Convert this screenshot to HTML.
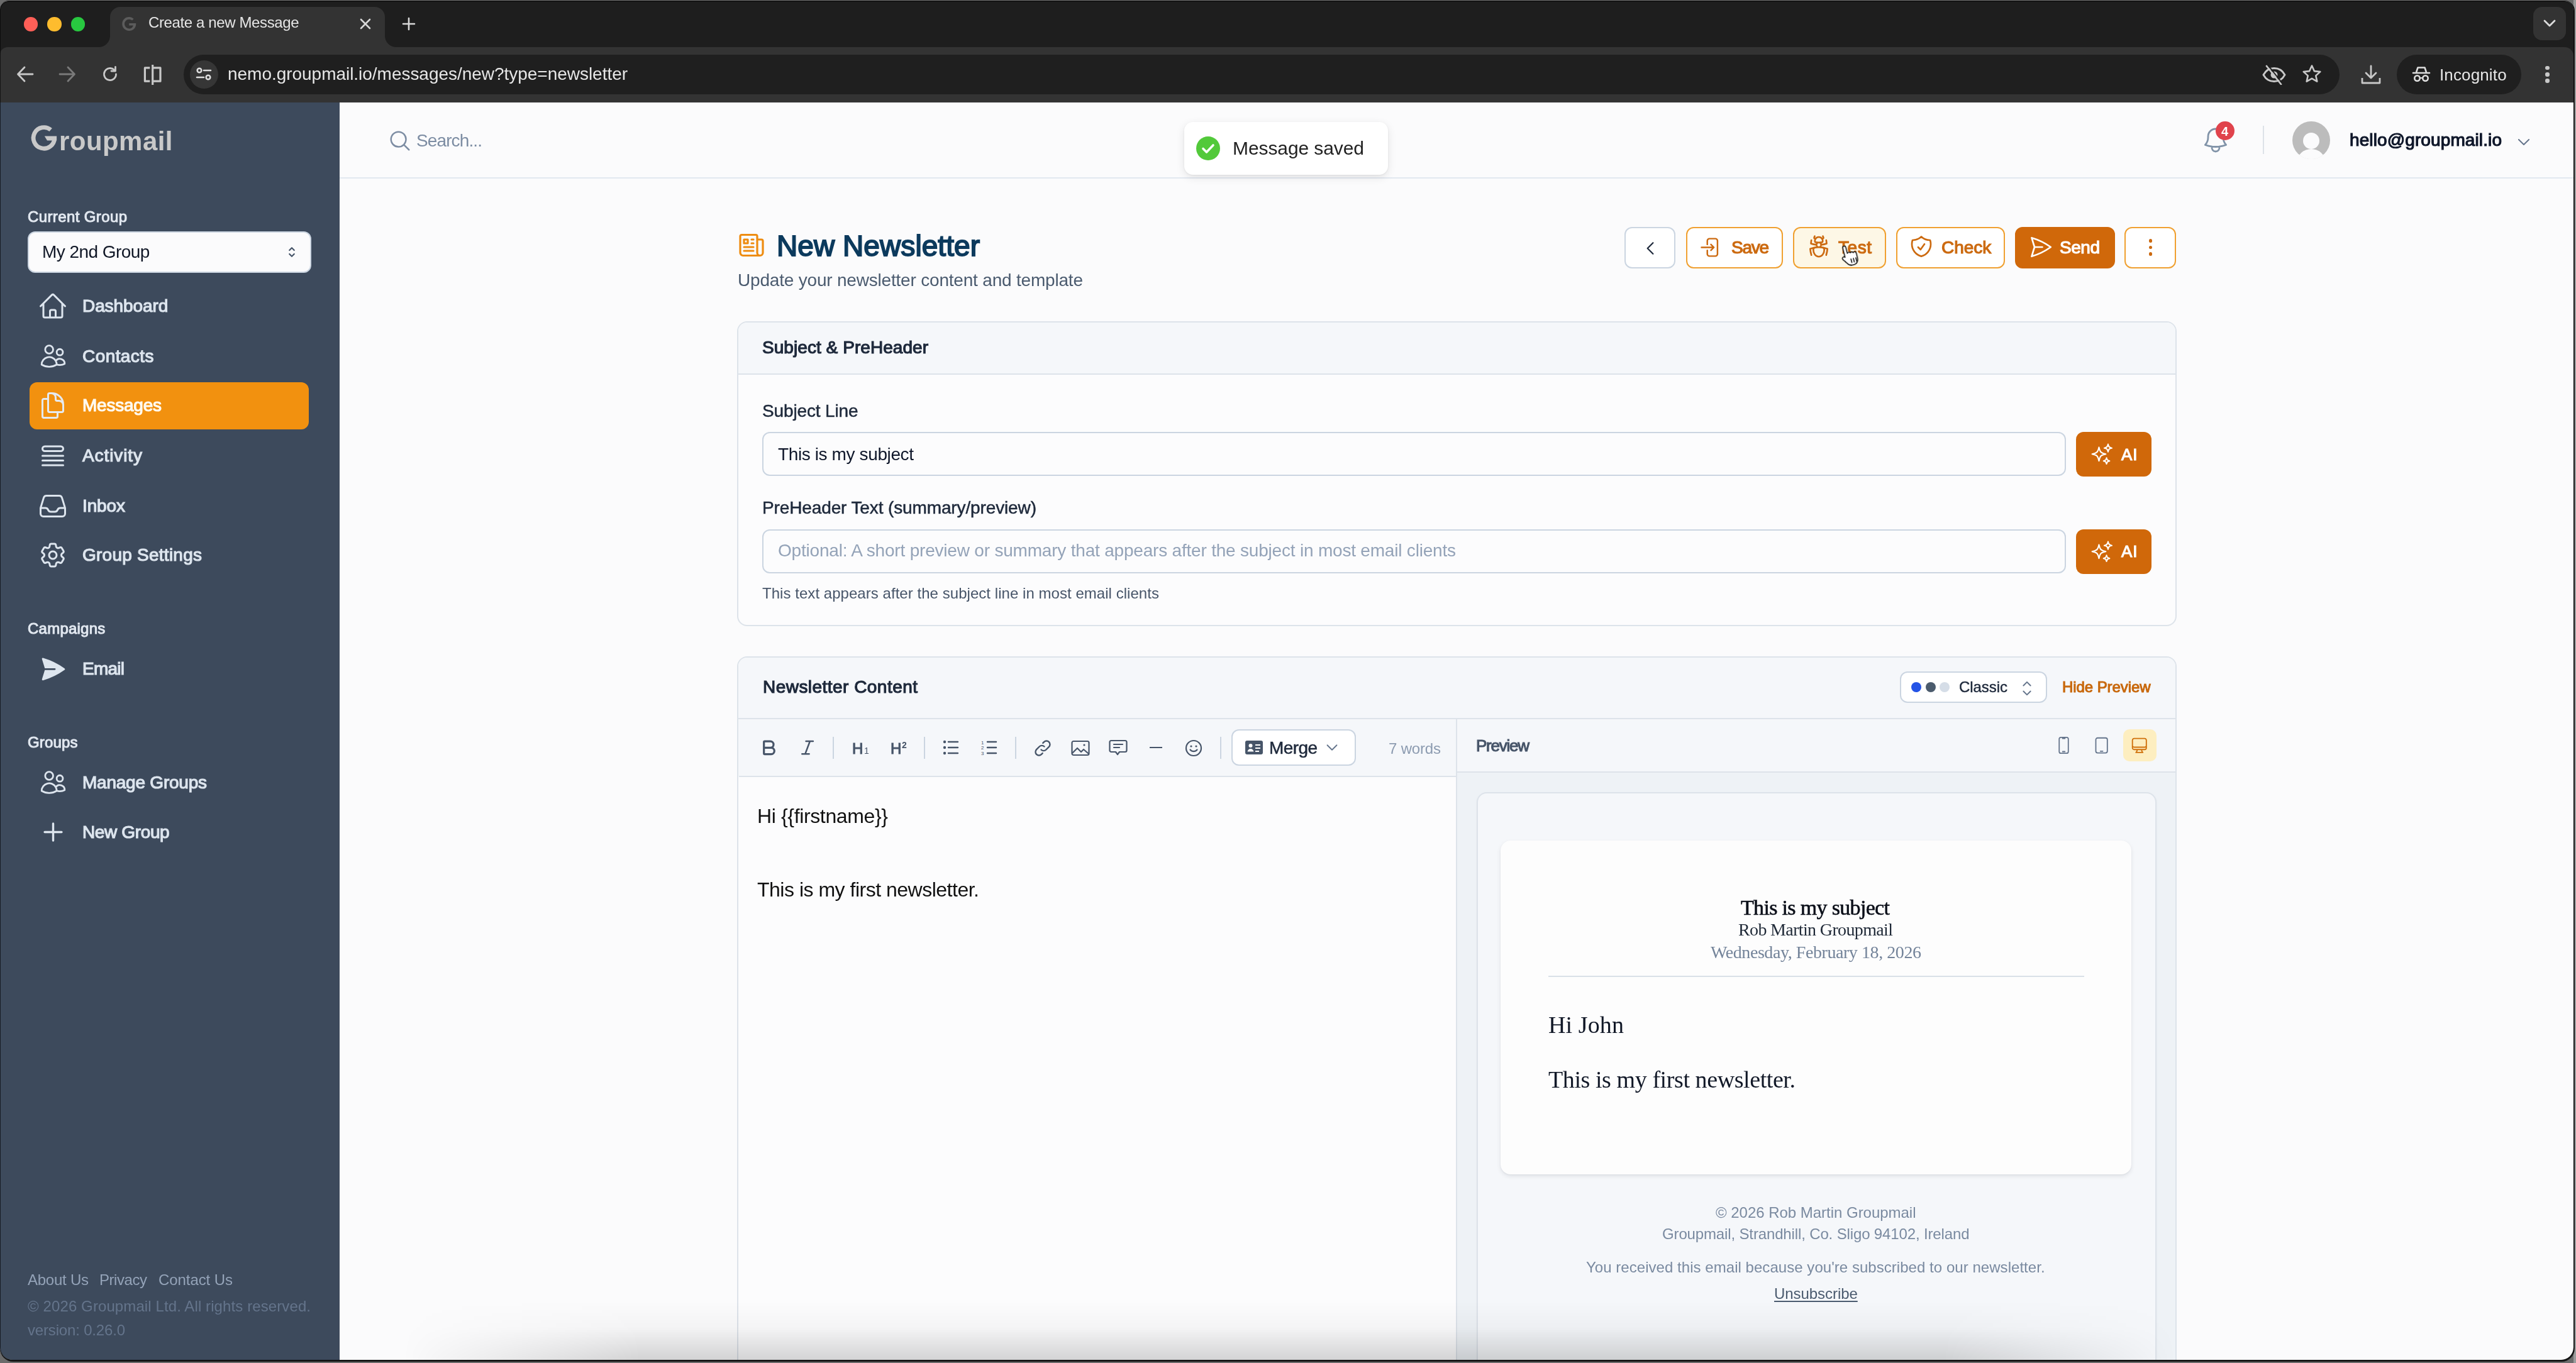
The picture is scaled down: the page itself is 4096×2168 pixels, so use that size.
<!DOCTYPE html>
<html><head><meta charset="utf-8"><title>Create a new Message</title>
<style>
html,body{margin:0;padding:0;width:4096px;height:2168px;overflow:hidden;background:#6b6b6b;}
*{box-sizing:border-box;}
body div{-webkit-font-smoothing:antialiased;}
</style></head><body>
<div style="position:absolute;left:4092px;top:0px;width:4px;height:2168px;background:#9c9c9c"></div>
<div style="position:absolute;left:0px;top:1px;width:4093.5px;height:2164.5px;background:#1c1c1c;border-radius:14px 16px 21px 21px"></div>
<div style="position:absolute;left:0;top:0;width:4096px;height:2168px;clip-path:inset(2px 4px 5px 0px round 13px 15px 20px 20px);background:#fbfbfc">
<div style="position:absolute;left:0px;top:0px;width:4096px;height:163px;background:#1e1e1e"></div>
<div style="position:absolute;left:0px;top:75px;width:4092px;height:88px;background:#333333;border-radius:12px 14px 0 0"></div>
<div style="position:absolute;left:38.0px;top:27.3px;width:22.4px;height:22.4px;background:#ff5f57;border-radius:50%"></div>
<div style="position:absolute;left:75.3px;top:27.3px;width:22.4px;height:22.4px;background:#febc2e;border-radius:50%"></div>
<div style="position:absolute;left:113.0px;top:27.3px;width:22.4px;height:22.4px;background:#28c840;border-radius:50%"></div>
<div style="position:absolute;left:175px;top:11px;width:437px;height:64px;background:#333333;border-radius:16px 16px 0 0"></div>
<div style="position:absolute;left:157px;top:57px;width:18px;height:18px;background:radial-gradient(circle at 0 0, #1e1e1e 17.5px, #333333 18.5px)"></div>
<div style="position:absolute;left:612px;top:57px;width:18px;height:18px;background:radial-gradient(circle at 100% 0, #1e1e1e 17.5px, #333333 18.5px)"></div>
<svg style="position:absolute;left:191px;top:24px;" width="28" height="28" viewBox="0 0 24 24" fill="none"><path d="M21.5 11.2H12.2v2.9h5.6c-.5 2.6-2.8 4.3-5.6 4.3-3.4 0-6.2-2.8-6.2-6.3S8.8 5.8 12.2 5.8c1.6 0 3 .6 4.1 1.5l2.2-2.2C16.8 3.6 14.6 2.6 12.2 2.6 7 2.6 2.8 6.8 2.8 12s4.2 9.4 9.4 9.4c5.4 0 9.4-3.8 9.4-9.2 0-.4 0-.7-.1-1Z" fill="#5c5c5c"/></svg>
<div style="position:absolute;left:236.00px;top:24.48px;font-family:'Liberation Sans', sans-serif;font-size:24px;line-height:24px;font-weight:400;color:#e6e6e6;white-space:pre;letter-spacing:-0.379px;will-change:transform;">Create a new Message</div>
<svg style="position:absolute;left:572px;top:29px;" width="18" height="18" viewBox="0 0 18 18" fill="none"><path d="M2 2 16 16M16 2 2 16" stroke="#d8d8d8" stroke-width="2.6" stroke-linecap="round"/></svg>
<svg style="position:absolute;left:639px;top:27px;" width="22" height="22" viewBox="0 0 22 22" fill="none"><path d="M11 2v18M2 11h18" stroke="#d8d8d8" stroke-width="2.6" stroke-linecap="round"/></svg>
<div style="position:absolute;left:4028px;top:11px;width:52px;height:53px;background:#333333;border-radius:14px"></div>
<svg style="position:absolute;left:4044px;top:31px;" width="20" height="12" viewBox="0 0 20 12" fill="none"><path d="M2 2 10 10 18 2" stroke="#dcdcdc" stroke-width="2.8" stroke-linecap="round" stroke-linejoin="round" fill="none"/></svg>
<svg style="position:absolute;left:26px;top:104px;" width="28" height="28" viewBox="0 0 28 28" fill="none"><path d="M26 14H3M13 3 2.5 14 13 25" stroke="#c8c8c8" stroke-width="2.8" stroke-linecap="round" stroke-linejoin="round" fill="none"/></svg>
<svg style="position:absolute;left:93px;top:104px;" width="28" height="28" viewBox="0 0 28 28" fill="none"><path d="M2 14h23M15 3l10.5 11L15 25" stroke="#7a7a7a" stroke-width="2.8" stroke-linecap="round" stroke-linejoin="round" fill="none"/></svg>
<svg style="position:absolute;left:161px;top:104px;" width="28" height="28" viewBox="0 0 28 28" fill="none"><path d="M23.5 14A9.5 9.5 0 1 1 20.7 7.3" stroke="#c8c8c8" stroke-width="2.8" stroke-linecap="round" fill="none"/><path d="M22.5 2.5v6.5H16" stroke="#c8c8c8" stroke-width="2.8" stroke-linecap="round" stroke-linejoin="round" fill="none"/></svg>
<svg style="position:absolute;left:228px;top:102px;" width="32" height="34" viewBox="0 0 32 34" fill="none"><path d="M10.3 5.9H2.4V27.2H10.3M14.7 1V33M14.7 5.9H27V27.2H14.7" stroke="#c8c8c8" stroke-width="3.2" stroke-linejoin="round" fill="none"/></svg>
<div style="position:absolute;left:292px;top:87px;width:3428px;height:63px;background:#1f1f1f;border-radius:32px"></div>
<div style="position:absolute;left:301.5px;top:96px;width:45px;height:45px;background:#363636;border-radius:50%"></div>
<svg style="position:absolute;left:310px;top:104px;" width="28" height="28" viewBox="0 0 28 28" fill="none"><circle cx="7" cy="8" r="3.3" stroke="#dedede" stroke-width="2.6" fill="none"/><path d="M14 8h11M3 19h11" stroke="#dedede" stroke-width="2.6" stroke-linecap="round"/><circle cx="21" cy="19" r="3.3" stroke="#dedede" stroke-width="2.6" fill="none"/></svg>
<div style="position:absolute;left:362.00px;top:104.29px;font-family:'Liberation Sans', sans-serif;font-size:28px;line-height:28px;font-weight:400;color:#e6e6e6;white-space:pre;letter-spacing:-0.030px;will-change:transform;">nemo.groupmail.io/messages/new?type=newsletter</div>
<svg style="position:absolute;left:3596px;top:103px;" width="40" height="32" viewBox="0 0 40 32" fill="none"><path d="M3 16C7 8.5 12.5 5.5 20 5.5S33 8.5 37 16c-4 7.5-9.5 10.5-17 10.5S7 23.5 3 16Z" stroke="#c8c8c8" stroke-width="2.8" fill="none"/><circle cx="20" cy="16" r="5.5" fill="#c8c8c8"/><path d="M8 2 31 31" stroke="#c8c8c8" stroke-width="2.8" stroke-linecap="round"/><path d="M10.5 1 33.5 30" stroke="#1f1f1f" stroke-width="2" /></svg>
<svg style="position:absolute;left:3660px;top:102px;" width="32" height="31" viewBox="0 0 32 31" fill="none"><path d="M16 2.5l3.9 8.6 9.4 1-7 6.3 2 9.2L16 22.9l-8.3 4.7 2-9.2-7-6.3 9.4-1Z" stroke="#c8c8c8" stroke-width="2.6" stroke-linejoin="round" fill="none"/></svg>
<svg style="position:absolute;left:3753px;top:103px;" width="34" height="32" viewBox="0 0 34 32" fill="none"><path d="M17 2v19M9 13l8 8 8-8" stroke="#c8c8c8" stroke-width="2.8" stroke-linecap="round" stroke-linejoin="round" fill="none"/><path d="M3 21v8h28v-8" stroke="#c8c8c8" stroke-width="2.8" stroke-linejoin="round" fill="none"/></svg>
<div style="position:absolute;left:3811px;top:87px;width:198px;height:63px;background:#1f1f1f;border-radius:32px"></div>
<svg style="position:absolute;left:3835px;top:104px;" width="30" height="28" viewBox="0 0 30 28" fill="none"><path d="M7 11 9.5 3.5h11L23 11" stroke="#dedede" stroke-width="2.6" stroke-linejoin="round" fill="none"/><path d="M2 12h26" stroke="#dedede" stroke-width="2.6" stroke-linecap="round"/><circle cx="8.5" cy="20.5" r="4.2" stroke="#dedede" stroke-width="2.6" fill="none"/><circle cx="21.5" cy="20.5" r="4.2" stroke="#dedede" stroke-width="2.6" fill="none"/><path d="M12.7 20h4.6" stroke="#dedede" stroke-width="2.2"/></svg>
<div style="position:absolute;left:3879.40px;top:105.59px;font-family:'Liberation Sans', sans-serif;font-size:26px;line-height:26px;font-weight:400;color:#e6e6e6;white-space:pre;letter-spacing:0.134px;will-change:transform;">Incognito</div>
<div style="position:absolute;left:4047.3999999999996px;top:104.9px;width:6.6px;height:6.6px;background:#c8c8c8;border-radius:50%"></div>
<div style="position:absolute;left:4047.3999999999996px;top:115.2px;width:6.6px;height:6.6px;background:#c8c8c8;border-radius:50%"></div>
<div style="position:absolute;left:4047.3999999999996px;top:125.39999999999999px;width:6.6px;height:6.6px;background:#c8c8c8;border-radius:50%"></div>
<div style="position:absolute;left:0px;top:163px;width:540px;height:2001px;background:#3d4a5c"></div>
<svg style="position:absolute;left:0;top:0" width="120" height="260" viewBox="0 0 120 260" fill="none"><path d="M80.7 206.5A16.8 16.8 0 1 0 86.7 220.3" stroke="#c9c9c9" stroke-width="6.8" fill="none"/><path d="M70.8 216.6H90.1V223.4H75Z" fill="#c9c9c9"/></svg>
<div style="position:absolute;left:93.50px;top:203.64px;font-family:'Liberation Sans', sans-serif;font-size:42px;line-height:42px;font-weight:700;color:#c9c9c9;white-space:pre;letter-spacing:0.449px;will-change:transform;">roupmail</div>
<div style="position:absolute;left:43.60px;top:333.38px;font-family:'Liberation Sans', sans-serif;font-size:24px;line-height:24px;font-weight:400;color:#e2e8f0;white-space:pre;-webkit-text-stroke:1.01px #e2e8f0;letter-spacing:0.383px;will-change:transform;">Current Group</div>
<div style="position:absolute;left:43.6px;top:367.8px;width:451px;height:66.6px;background:#fbfbfc;border:2px solid #cbd5e1;border-radius:12px"></div>
<div style="position:absolute;left:66.60px;top:387.29px;font-family:'Liberation Sans', sans-serif;font-size:28px;line-height:28px;font-weight:400;color:#111827;white-space:pre;letter-spacing:-0.547px;will-change:transform;">My 2nd Group</div>
<svg style="position:absolute;left:452px;top:389px;" width="24" height="24" viewBox="0 0 24 24" fill="none"><path d="M8.25 15 12 18.75 15.75 15m-7.5-6L12 5.25 15.75 9" stroke="#475569" stroke-width="2.2" stroke-linecap="round" stroke-linejoin="round"/></svg>
<svg style="position:absolute;left:60.3px;top:462.8px;" width="48" height="48" viewBox="0 0 24 24" fill="none"><path d="m2.25 12 8.954-8.955c.44-.439 1.152-.439 1.591 0L21.75 12M4.5 9.75v10.125c0 .621.504 1.125 1.125 1.125H9.75v-4.875c0-.621.504-1.125 1.125-1.125h2.25c.621 0 1.125.504 1.125 1.125V21h4.125c.621 0 1.125-.504 1.125-1.125V9.75M8.25 21h8.25" stroke="#dde5ee" stroke-width="1.5" stroke-linecap="round" stroke-linejoin="round"/></svg>
<div style="position:absolute;left:131.20px;top:473.09px;font-family:'Liberation Sans', sans-serif;font-size:28px;line-height:28px;font-weight:400;color:#dde5ee;white-space:pre;-webkit-text-stroke:1.18px #dde5ee;letter-spacing:-0.086px;will-change:transform;">Dashboard</div>
<svg style="position:absolute;left:62.400000000000006px;top:543.9px;" width="45" height="45" viewBox="0 0 24 24" fill="none"><path d="M15 19.128a9.38 9.38 0 0 0 2.625.372 9.337 9.337 0 0 0 4.121-.952 4.125 4.125 0 0 0-7.533-2.493M15 19.128v-.003c0-1.113-.285-2.16-.786-3.07M15 19.128v.106A12.318 12.318 0 0 1 8.624 21c-2.331 0-4.512-.645-6.374-1.766l-.001-.109a6.375 6.375 0 0 1 11.964-3.07M12 6.375a3.375 3.375 0 1 1-6.75 0 3.375 3.375 0 0 1 6.75 0Zm8.25 2.25a2.625 2.625 0 1 1-5.25 0 2.625 2.625 0 0 1 5.25 0Z" stroke="#dde5ee" stroke-width="1.5" stroke-linecap="round" stroke-linejoin="round"/></svg>
<div style="position:absolute;left:131.20px;top:552.69px;font-family:'Liberation Sans', sans-serif;font-size:28px;line-height:28px;font-weight:400;color:#dde5ee;white-space:pre;-webkit-text-stroke:1.18px #dde5ee;letter-spacing:0.429px;will-change:transform;">Contacts</div>
<div style="position:absolute;left:47.2px;top:607.8px;width:444.1px;height:75.4px;background:#f2910f;border-radius:12px"></div>
<svg style="position:absolute;left:60.3px;top:621.0px;" width="48" height="48" viewBox="0 0 24 24" fill="none"><path d="M15.75 17.25v3.375c0 .621-.504 1.125-1.125 1.125h-9.75a1.125 1.125 0 0 1-1.125-1.125V7.875c0-.621.504-1.125 1.125-1.125H6.75a9.06 9.06 0 0 1 1.5.124m7.5 10.376h3.375c.621 0 1.125-.504 1.125-1.125V11.25c0-4.46-3.243-8.161-7.5-8.876a9.06 9.06 0 0 0-1.5-.124H9.375c-.621 0-1.125.504-1.125 1.125v3.5m7.5 10.375H9.375a1.125 1.125 0 0 1-1.125-1.125v-9.25m12 6.625v-1.875a3.375 3.375 0 0 0-3.375-3.375h-1.5a1.125 1.125 0 0 1-1.125-1.125v-1.5a3.375 3.375 0 0 0-3.375-3.375H9.75" stroke="#e5eaf0" stroke-width="1.5" stroke-linecap="round" stroke-linejoin="round"/></svg>
<div style="position:absolute;left:131.20px;top:631.29px;font-family:'Liberation Sans', sans-serif;font-size:28px;line-height:28px;font-weight:400;color:#fffaf0;white-space:pre;-webkit-text-stroke:1.18px #fffaf0;letter-spacing:-0.232px;will-change:transform;">Messages</div>
<svg style="position:absolute;left:60.3px;top:701.0px;" width="48" height="48" viewBox="0 0 24 24" fill="none"><path d="M3.75 12h16.5m-16.5 3.75h16.5M3.75 19.5h16.5M5.625 4.5h12.75a1.875 1.875 0 0 1 0 3.75H5.625a1.875 1.875 0 0 1 0-3.75Z" stroke="#dde5ee" stroke-width="1.5" stroke-linecap="round" stroke-linejoin="round"/></svg>
<div style="position:absolute;left:131.20px;top:711.29px;font-family:'Liberation Sans', sans-serif;font-size:28px;line-height:28px;font-weight:400;color:#dde5ee;white-space:pre;-webkit-text-stroke:1.18px #dde5ee;letter-spacing:0.902px;will-change:transform;">Activity</div>
<svg style="position:absolute;left:60.3px;top:780.6px;" width="48" height="48" viewBox="0 0 24 24" fill="none"><path d="M2.25 13.5h3.86a2.25 2.25 0 0 1 2.012 1.244l.256.512a2.25 2.25 0 0 0 2.013 1.244h3.218a2.25 2.25 0 0 0 2.013-1.244l.256-.512a2.25 2.25 0 0 1 2.013-1.244h3.859m-19.5.338V18a2.25 2.25 0 0 0 2.25 2.25h15A2.25 2.25 0 0 0 21.75 18v-4.162c0-.224-.034-.447-.1-.661L19.24 5.338a2.25 2.25 0 0 0-2.15-1.588H6.911a2.25 2.25 0 0 0-2.15 1.588L2.35 13.177a2.25 2.25 0 0 0-.1.661Z" stroke="#dde5ee" stroke-width="1.5" stroke-linecap="round" stroke-linejoin="round"/></svg>
<div style="position:absolute;left:131.20px;top:790.89px;font-family:'Liberation Sans', sans-serif;font-size:28px;line-height:28px;font-weight:400;color:#dde5ee;white-space:pre;-webkit-text-stroke:1.18px #dde5ee;letter-spacing:-0.125px;will-change:transform;">Inbox</div>
<svg style="position:absolute;left:60.3px;top:859.0px;" width="48" height="48" viewBox="0 0 24 24" fill="none"><path d="M9.594 3.94c.09-.542.56-.94 1.11-.94h2.593c.55 0 1.02.398 1.11.94l.213 1.281c.063.374.313.686.645.87.074.04.147.083.22.127.325.196.72.257 1.075.124l1.217-.456a1.125 1.125 0 0 1 1.37.49l1.296 2.247a1.125 1.125 0 0 1-.26 1.431l-1.003.827c-.293.241-.438.613-.43.992a7.723 7.723 0 0 1 0 .255c-.008.378.137.75.43.991l1.004.827c.424.35.534.955.26 1.43l-1.298 2.247a1.125 1.125 0 0 1-1.369.491l-1.217-.456c-.355-.133-.75-.072-1.076.124a6.47 6.47 0 0 1-.22.128c-.331.183-.581.495-.644.869l-.213 1.281c-.09.543-.56.94-1.11.94h-2.594c-.55 0-1.019-.398-1.11-.94l-.213-1.281c-.062-.374-.312-.686-.644-.87a6.52 6.52 0 0 1-.22-.127c-.325-.196-.72-.257-1.076-.124l-1.217.456a1.125 1.125 0 0 1-1.369-.49l-1.297-2.247a1.125 1.125 0 0 1 .26-1.431l1.004-.827c.292-.24.437-.613.43-.991a6.932 6.932 0 0 1 0-.255c.007-.38-.138-.751-.43-.992l-1.004-.827a1.125 1.125 0 0 1-.26-1.43l1.297-2.247a1.125 1.125 0 0 1 1.37-.491l1.216.456c.356.133.751.072 1.076-.124.072-.044.146-.086.22-.128.332-.183.582-.495.644-.869l.214-1.28Z M15 12a3 3 0 1 1-6 0 3 3 0 0 1 6 0Z" stroke="#dde5ee" stroke-width="1.5" stroke-linecap="round" stroke-linejoin="round"/></svg>
<div style="position:absolute;left:131.20px;top:869.29px;font-family:'Liberation Sans', sans-serif;font-size:28px;line-height:28px;font-weight:400;color:#dde5ee;white-space:pre;-webkit-text-stroke:1.18px #dde5ee;letter-spacing:0.248px;will-change:transform;">Group Settings</div>
<div style="position:absolute;left:43.70px;top:988.48px;font-family:'Liberation Sans', sans-serif;font-size:24px;line-height:24px;font-weight:400;color:#e2e8f0;white-space:pre;-webkit-text-stroke:1.01px #e2e8f0;letter-spacing:0.237px;will-change:transform;">Campaigns</div>
<svg style="position:absolute;left:62.2px;top:1041.5px;" width="44.6" height="44.6" viewBox="0 0 24 24" fill="none"><path d="M3.478 2.404a.75.75 0 0 0-.926.941l2.432 7.905H13.5a.75.75 0 0 1 0 1.5H4.984l-2.432 7.905a.75.75 0 0 0 .926.94 60.519 60.519 0 0 0 18.445-8.986.75.75 0 0 0 0-1.218A60.517 60.517 0 0 0 3.478 2.404Z" fill="#dde5ee"/></svg>
<div style="position:absolute;left:131.20px;top:1050.29px;font-family:'Liberation Sans', sans-serif;font-size:28px;line-height:28px;font-weight:400;color:#dde5ee;white-space:pre;-webkit-text-stroke:1.18px #dde5ee;letter-spacing:-0.754px;will-change:transform;">Email</div>
<div style="position:absolute;left:43.70px;top:1169.38px;font-family:'Liberation Sans', sans-serif;font-size:24px;line-height:24px;font-weight:400;color:#e2e8f0;white-space:pre;-webkit-text-stroke:1.01px #e2e8f0;letter-spacing:0.179px;will-change:transform;">Groups</div>
<svg style="position:absolute;left:62.400000000000006px;top:1221.9px;" width="45" height="45" viewBox="0 0 24 24" fill="none"><path d="M15 19.128a9.38 9.38 0 0 0 2.625.372 9.337 9.337 0 0 0 4.121-.952 4.125 4.125 0 0 0-7.533-2.493M15 19.128v-.003c0-1.113-.285-2.16-.786-3.07M15 19.128v.106A12.318 12.318 0 0 1 8.624 21c-2.331 0-4.512-.645-6.374-1.766l-.001-.109a6.375 6.375 0 0 1 11.964-3.07M12 6.375a3.375 3.375 0 1 1-6.75 0 3.375 3.375 0 0 1 6.75 0Zm8.25 2.25a2.625 2.625 0 1 1-5.25 0 2.625 2.625 0 0 1 5.25 0Z" stroke="#dde5ee" stroke-width="1.5" stroke-linecap="round" stroke-linejoin="round"/></svg>
<div style="position:absolute;left:131.20px;top:1230.69px;font-family:'Liberation Sans', sans-serif;font-size:28px;line-height:28px;font-weight:400;color:#dde5ee;white-space:pre;-webkit-text-stroke:1.18px #dde5ee;letter-spacing:-0.233px;will-change:transform;">Manage Groups</div>
<svg style="position:absolute;left:63.099999999999994px;top:1302.0px;" width="43" height="43" viewBox="0 0 24 24" fill="none"><path d="M12 4.5v15m7.5-7.5h-15" stroke="#dde5ee" stroke-width="1.9" stroke-linecap="round" stroke-linejoin="round"/></svg>
<div style="position:absolute;left:131.20px;top:1309.79px;font-family:'Liberation Sans', sans-serif;font-size:28px;line-height:28px;font-weight:400;color:#dde5ee;white-space:pre;-webkit-text-stroke:1.18px #dde5ee;letter-spacing:-0.366px;will-change:transform;">New Group</div>
<div style="position:absolute;left:44.00px;top:2024.48px;font-family:'Liberation Sans', sans-serif;font-size:24px;line-height:24px;font-weight:400;color:#94a3b8;white-space:pre;letter-spacing:-0.246px;will-change:transform;">About Us</div>
<div style="position:absolute;left:158.30px;top:2024.48px;font-family:'Liberation Sans', sans-serif;font-size:24px;line-height:24px;font-weight:400;color:#94a3b8;white-space:pre;letter-spacing:-0.448px;will-change:transform;">Privacy</div>
<div style="position:absolute;left:251.70px;top:2024.48px;font-family:'Liberation Sans', sans-serif;font-size:24px;line-height:24px;font-weight:400;color:#94a3b8;white-space:pre;letter-spacing:-0.080px;will-change:transform;">Contact Us</div>
<div style="position:absolute;left:44.00px;top:2065.68px;font-family:'Liberation Sans', sans-serif;font-size:24px;line-height:24px;font-weight:400;color:#64748b;white-space:pre;letter-spacing:0.100px;will-change:transform;">© 2026 Groupmail Ltd. All rights reserved.</div>
<div style="position:absolute;left:44.00px;top:2103.68px;font-family:'Liberation Sans', sans-serif;font-size:24px;line-height:24px;font-weight:400;color:#64748b;white-space:pre;letter-spacing:-0.174px;will-change:transform;">version: 0.26.0</div>
<div style="position:absolute;left:540px;top:163px;width:3556px;height:120px;background:#fbfbfc"></div>
<div style="position:absolute;left:540px;top:282px;width:3556px;height:2px;background:#e2e8f0"></div>
<svg style="position:absolute;left:616.6px;top:205px;" width="38" height="38" viewBox="0 0 24 24" fill="none"><path d="m21 21-5.197-5.197m0 0A7.5 7.5 0 1 0 5.196 5.196a7.5 7.5 0 0 0 10.607 10.607Z" stroke="#7d8da3" stroke-width="1.6" stroke-linecap="round" stroke-linejoin="round"/></svg>
<div style="position:absolute;left:662.00px;top:210.29px;font-family:'Liberation Sans', sans-serif;font-size:28px;line-height:28px;font-weight:400;color:#7d8da3;white-space:pre;letter-spacing:-0.883px;will-change:transform;">Search...</div>
<div style="position:absolute;left:1883px;top:194px;width:324px;height:84px;background:#ffffff;border-radius:14px;box-shadow:0 4px 14px rgba(0,0,0,0.10), 0 1px 3px rgba(0,0,0,0.06)"></div>
<div style="position:absolute;left:1902px;top:217px;width:38px;height:38px;background:#52c93a;border-radius:50%"></div>
<svg style="position:absolute;left:1902px;top:217px;" width="38" height="38" viewBox="0 0 38 38" fill="none"><path d="M11 19.5 16.5 25 27 14" stroke="#fff" stroke-width="3.6" stroke-linecap="round" stroke-linejoin="round" fill="none"/></svg>
<div style="position:absolute;left:1960.00px;top:221.30px;font-family:'Liberation Sans', sans-serif;font-size:30px;line-height:30px;font-weight:400;color:#222222;white-space:pre;letter-spacing:-0.094px;will-change:transform;">Message saved</div>
<svg style="position:absolute;left:3499px;top:199px;" width="48" height="48" viewBox="0 0 24 24" fill="none"><path d="M14.857 17.082a23.848 23.848 0 0 0 5.454-1.31A8.967 8.967 0 0 1 18 9.75V9A6 6 0 0 0 6 9v.75a8.967 8.967 0 0 1-2.312 6.022c1.733.64 3.56 1.085 5.455 1.31m5.714 0a24.255 24.255 0 0 1-5.714 0m5.714 0a3 3 0 1 1-5.714 0" stroke="#8193a8" stroke-width="1.4" stroke-linecap="round" stroke-linejoin="round"/></svg>
<div style="position:absolute;left:3523px;top:193px;width:30px;height:30px;background:#e0434c;border-radius:50%"></div>
<div style="position:absolute;left:3532.44px;top:199.07px;font-family:'Liberation Sans', sans-serif;font-size:20px;line-height:20px;font-weight:700;color:#ffffff;white-space:pre;letter-spacing:0.000px;will-change:transform;">4</div>
<div style="position:absolute;left:3598px;top:200px;width:2px;height:45px;background:#dde2e8"></div>
<div style="position:absolute;left:3645px;top:193px;width:60px;height:60px;border-radius:50%;background:#bcbcbc;overflow:hidden"><div style="position:absolute;left:17px;top:17.5px;width:26px;height:26px;border-radius:50%;background:#fbfbfc"></div><div style="position:absolute;left:8px;top:43.5px;width:44px;height:40px;border-radius:50%;background:#fbfbfc"></div><div style="position:absolute;left:0;top:52.8px;width:60px;height:10px;background:#fbfbfc"></div></div>
<div style="position:absolute;left:3736.00px;top:208.69px;font-family:'Liberation Sans', sans-serif;font-size:28px;line-height:28px;font-weight:400;color:#0f172a;white-space:pre;-webkit-text-stroke:1.18px #0f172a;letter-spacing:0.111px;will-change:transform;">hello@groupmail.io</div>
<svg style="position:absolute;left:4000px;top:213px;" width="26" height="26" viewBox="0 0 24 24" fill="none"><path d="m19.5 8.25-7.5 7.5-7.5-7.5" stroke="#64748b" stroke-width="1.8" stroke-linecap="round" stroke-linejoin="round"/></svg>
<svg style="position:absolute;left:1170.5px;top:365.5px;" width="48" height="48" viewBox="0 0 24 24" fill="none"><path d="M12 7.5h1.5m-1.5 3h1.5m-7.5 3h7.5m-7.5 3h7.5m3-9h3.375c.621 0 1.125.504 1.125 1.125V18a2.25 2.25 0 0 1-2.25 2.25M16.5 7.5V18a2.25 2.25 0 0 0 2.25 2.25M16.5 7.5V4.875c0-.621-.504-1.125-1.125-1.125H4.125C3.504 3.75 3 4.254 3 4.875V18a2.25 2.25 0 0 0 2.25 2.25h13.5M6 7.5h3v3H6v-3Z" stroke="#ee8c10" stroke-width="1.6" stroke-linecap="round" stroke-linejoin="round"/></svg>
<div style="position:absolute;left:1234.50px;top:367.95px;font-family:'Liberation Sans', sans-serif;font-size:46px;line-height:46px;font-weight:400;color:#0c3a5d;white-space:pre;-webkit-text-stroke:1.93px #0c3a5d;letter-spacing:0.070px;will-change:transform;">New Newsletter</div>
<div style="position:absolute;left:1172.70px;top:431.59px;font-family:'Liberation Sans', sans-serif;font-size:28px;line-height:28px;font-weight:400;color:#4b5b6f;white-space:pre;letter-spacing:-0.196px;will-change:transform;">Update your newsletter content and template</div>
<div style="position:absolute;left:2583px;top:360.8px;width:81px;height:66px;background:#ffffff;border:2px solid #cbd5e1;border-radius:12px"></div>
<svg style="position:absolute;left:2610px;top:381px;" width="28" height="28" viewBox="0 0 24 24" fill="none"><path d="M15.75 19.5 8.25 12l7.5-7.5" stroke="#1e293b" stroke-width="1.9" stroke-linecap="round" stroke-linejoin="round"/></svg>
<div style="position:absolute;left:2681px;top:360.8px;width:154px;height:66px;background:#ffffff;border:2px solid #f0a030;border-radius:12px"></div>
<svg style="position:absolute;left:2702px;top:375px;" width="37" height="37" viewBox="0 0 24 24" fill="none"><path d="M8.25 9V5.25A2.25 2.25 0 0 1 10.5 3h6a2.25 2.25 0 0 1 2.25 2.25v13.5A2.25 2.25 0 0 1 16.5 21h-6a2.25 2.25 0 0 1-2.25-2.25V15M12 9l3 3m0 0-3 3m3-3H2.25" stroke="#cc6a10" stroke-width="1.6" stroke-linecap="round" stroke-linejoin="round"/></svg>
<div style="position:absolute;left:2752.90px;top:380.29px;font-family:'Liberation Sans', sans-serif;font-size:28px;line-height:28px;font-weight:400;color:#cc6a10;white-space:pre;-webkit-text-stroke:1.18px #cc6a10;letter-spacing:-1.276px;will-change:transform;">Save</div>
<div style="position:absolute;left:2851px;top:360.8px;width:148px;height:66px;background:#fdf7e6;border:2px solid #f0a030;border-radius:12px"></div>
<svg style="position:absolute;left:2872px;top:372px;" width="40" height="40" viewBox="0 0 24 24" fill="none"><path d="M12 12.75c1.148 0 2.278.08 3.383.237 1.037.146 1.866.966 1.866 2.013 0 3.728-2.35 6.75-5.25 6.75S6.75 18.728 6.75 15c0-1.046.83-1.867 1.866-2.013A24.204 24.204 0 0 1 12 12.75Zm0 0c2.883 0 5.647.508 8.207 1.44a23.91 23.91 0 0 1-1.152 6.06M12 12.75c-2.883 0-5.647.508-8.208 1.44.125 2.104.52 4.136 1.153 6.06M12 12.75a2.25 2.25 0 0 0 2.248-2.354M12 12.75a2.25 2.25 0 0 1-2.248-2.354M12 8.25c.995 0 1.971-.08 2.922-.236.403-.066.74-.358.795-.762a3.778 3.778 0 0 0-.399-2.25M12 8.25c-.995 0-1.97-.08-2.922-.236-.402-.066-.74-.358-.795-.762a3.734 3.734 0 0 1 .4-2.253M12 8.25a2.25 2.25 0 0 0-2.248 2.146M12 8.25a2.25 2.25 0 0 1 2.248 2.146M8.683 5a6.032 6.032 0 0 1-1.155-1.002c.07-.63.27-1.222.574-1.747m.581 2.749A3.75 3.75 0 0 1 15.318 5m0 0c.427-.283.815-.62 1.155-.999a4.471 4.471 0 0 0-.575-1.752M4.921 6a24.048 24.048 0 0 0-.392 3.314c1.668.546 3.416.914 5.223 1.082M19.08 6c.205 1.08.337 2.187.392 3.314a23.882 23.882 0 0 1-5.223 1.082" stroke="#cc6a10" stroke-width="1.6" stroke-linecap="round" stroke-linejoin="round"/></svg>
<div style="position:absolute;left:2923.20px;top:380.29px;font-family:'Liberation Sans', sans-serif;font-size:28px;line-height:28px;font-weight:400;color:#cc6a10;white-space:pre;-webkit-text-stroke:1.18px #cc6a10;letter-spacing:0.547px;will-change:transform;">Test</div>
<div style="position:absolute;left:3014.6px;top:360.8px;width:173.4px;height:66px;background:#ffffff;border:2px solid #f0a030;border-radius:12px"></div>
<svg style="position:absolute;left:3035px;top:372px;" width="40" height="40" viewBox="0 0 24 24" fill="none"><path d="M9 12.75 11.25 15 15 9.75m-3-7.036A11.959 11.959 0 0 1 3.598 6 11.99 11.99 0 0 0 3 9.749c0 5.592 3.824 10.29 9 11.623 5.176-1.332 9-6.03 9-11.622 0-1.31-.21-2.571-.598-3.751h-.152c-3.196 0-6.1-1.248-8.25-3.285Z" stroke="#cc6a10" stroke-width="1.6" stroke-linecap="round" stroke-linejoin="round"/></svg>
<div style="position:absolute;left:3086.80px;top:380.29px;font-family:'Liberation Sans', sans-serif;font-size:28px;line-height:28px;font-weight:400;color:#cc6a10;white-space:pre;-webkit-text-stroke:1.18px #cc6a10;letter-spacing:-0.019px;will-change:transform;">Check</div>
<div style="position:absolute;left:3204px;top:360.8px;width:159px;height:66px;background:#d0680a;border:2px solid #d0680a;border-radius:12px"></div>
<svg style="position:absolute;left:3225px;top:373px;" width="40" height="40" viewBox="0 0 24 24" fill="none"><path d="M6 12 3.269 3.125A59.769 59.769 0 0 1 21.485 12 59.768 59.768 0 0 1 3.27 20.875L5.999 12Zm0 0h7.5" stroke="#ffffff" stroke-width="1.6" stroke-linecap="round" stroke-linejoin="round"/></svg>
<div style="position:absolute;left:3275.40px;top:380.29px;font-family:'Liberation Sans', sans-serif;font-size:28px;line-height:28px;font-weight:400;color:#ffffff;white-space:pre;-webkit-text-stroke:1.18px #ffffff;letter-spacing:-0.469px;will-change:transform;">Send</div>
<div style="position:absolute;left:3378px;top:360.8px;width:82px;height:66px;background:#ffffff;border:2px solid #f0a030;border-radius:12px"></div>
<div style="position:absolute;left:3416.7999999999997px;top:380.2px;width:5.6px;height:5.6px;background:#cc6a10;border-radius:50%"></div>
<div style="position:absolute;left:3416.7999999999997px;top:390.8px;width:5.6px;height:5.6px;background:#cc6a10;border-radius:50%"></div>
<div style="position:absolute;left:3416.7999999999997px;top:401.2px;width:5.6px;height:5.6px;background:#cc6a10;border-radius:50%"></div>
<svg style="position:absolute;left:2921px;top:388px;transform:rotate(-14deg);transform-origin:30% 10%" width="36" height="40" viewBox="0 0 34 40" fill="none"><path d="M10 3.5c1.5 0 2.5 1 2.5 2.5v10c.6-.9 1.5-1.3 2.4-1.3 1.2 0 2.1.7 2.4 1.6.5-.6 1.3-.9 2.1-.9 1.2 0 2.1.7 2.4 1.7.5-.5 1.2-.8 1.9-.8 1.6 0 2.8 1.2 2.8 2.9v8.5c0 4.6-3.6 8.3-8.2 8.3h-2.4c-2.6 0-4.8-1.2-6.4-3.3L3.4 24c-.8-1.1-.6-2.6.5-3.4 1-.8 2.5-.6 3.4.4l.2.3V6c0-1.5 1-2.5 2.5-2.5Z" fill="#fff" stroke="#111" stroke-width="1.6" stroke-linejoin="round"/><path d="M16 26v6M20 26v6M24 26v6" stroke="#111" stroke-width="1.6" stroke-linecap="round"/></svg>
<div style="position:absolute;left:1172.4px;top:510.5px;width:2288.5px;height:485.5px;background:#fcfcfd;border:2px solid #dde3ea;border-radius:16px;overflow:hidden"></div>
<div style="position:absolute;left:1174.4px;top:512.5px;width:2284.5px;height:83px;background:#f5f7fa;border-radius:14px 14px 0 0"></div>
<div style="position:absolute;left:1174.4px;top:594.4px;width:2284.5px;height:2px;background:#dde3ea"></div>
<div style="position:absolute;left:1212.20px;top:538.89px;font-family:'Liberation Sans', sans-serif;font-size:28px;line-height:28px;font-weight:400;color:#1e293b;white-space:pre;-webkit-text-stroke:1.18px #1e293b;letter-spacing:0.053px;will-change:transform;">Subject &amp; PreHeader</div>
<div style="position:absolute;left:1211.70px;top:639.79px;font-family:'Liberation Sans', sans-serif;font-size:28px;line-height:28px;font-weight:400;color:#1e293b;white-space:pre;-webkit-text-stroke:0.50px #1e293b;letter-spacing:-0.137px;will-change:transform;">Subject Line</div>
<div style="position:absolute;left:1211.7px;top:687px;width:2073.3px;height:70.4px;background:#fcfcfd;border:2px solid #cbd5e1;border-radius:12px"></div>
<div style="position:absolute;left:1236.80px;top:708.99px;font-family:'Liberation Sans', sans-serif;font-size:28px;line-height:28px;font-weight:400;color:#0f172a;white-space:pre;letter-spacing:-0.382px;will-change:transform;">This is my subject</div>
<div style="position:absolute;left:3301px;top:687px;width:120px;height:71px;background:#d0680a;border-radius:12px"></div>
<svg style="position:absolute;left:3323px;top:703.1px;" width="38.6" height="38.6" viewBox="0 0 24 24" fill="none"><path d="M9.813 15.904 9 18.75l-.813-2.846a4.5 4.5 0 0 0-3.09-3.09L2.25 12l2.846-.813a4.5 4.5 0 0 0 3.09-3.09L9 5.25l.813 2.846a4.5 4.5 0 0 0 3.09 3.09L15.75 12l-2.846.813a4.5 4.5 0 0 0-3.09 3.09ZM18.259 8.715 18 9.75l-.259-1.035a3.375 3.375 0 0 0-2.455-2.456L14.25 6l1.036-.259a3.375 3.375 0 0 0 2.455-2.456L18 2.25l.259 1.035a3.375 3.375 0 0 0 2.456 2.456L21.75 6l-1.035.259a3.375 3.375 0 0 0-2.456 2.456ZM16.894 20.567 16.5 21.75l-.394-1.183a2.25 2.25 0 0 0-1.423-1.423L13.5 18.75l1.183-.394a2.25 2.25 0 0 0 1.423-1.423l.394-1.183.394 1.183a2.25 2.25 0 0 0 1.423 1.423l1.183.394-1.183.394a2.25 2.25 0 0 0-1.423 1.423Z" stroke="#ffffff" stroke-width="1.3" stroke-linecap="round" stroke-linejoin="round"/></svg>
<div style="position:absolute;left:3373.20px;top:709.69px;font-family:'Liberation Sans', sans-serif;font-size:26px;line-height:26px;font-weight:400;color:#ffffff;white-space:pre;-webkit-text-stroke:1.09px #ffffff;letter-spacing:0.000px;will-change:transform;letter-spacing:1px">AI</div>
<div style="position:absolute;left:1211.70px;top:794.29px;font-family:'Liberation Sans', sans-serif;font-size:28px;line-height:28px;font-weight:400;color:#1e293b;white-space:pre;-webkit-text-stroke:0.50px #1e293b;letter-spacing:-0.124px;will-change:transform;">PreHeader Text (summary/preview)</div>
<div style="position:absolute;left:1211.7px;top:841.6px;width:2073.3px;height:70.4px;background:#fcfcfd;border:2px solid #cbd5e1;border-radius:12px"></div>
<div style="position:absolute;left:1236.80px;top:862.29px;font-family:'Liberation Sans', sans-serif;font-size:28px;line-height:28px;font-weight:400;color:#94a3b8;white-space:pre;letter-spacing:-0.200px;will-change:transform;">Optional: A short preview or summary that appears after the subject in most email clients</div>
<div style="position:absolute;left:3301px;top:841.6px;width:120px;height:71px;background:#d0680a;border-radius:12px"></div>
<svg style="position:absolute;left:3323px;top:857.7px;" width="38.6" height="38.6" viewBox="0 0 24 24" fill="none"><path d="M9.813 15.904 9 18.75l-.813-2.846a4.5 4.5 0 0 0-3.09-3.09L2.25 12l2.846-.813a4.5 4.5 0 0 0 3.09-3.09L9 5.25l.813 2.846a4.5 4.5 0 0 0 3.09 3.09L15.75 12l-2.846.813a4.5 4.5 0 0 0-3.09 3.09ZM18.259 8.715 18 9.75l-.259-1.035a3.375 3.375 0 0 0-2.455-2.456L14.25 6l1.036-.259a3.375 3.375 0 0 0 2.455-2.456L18 2.25l.259 1.035a3.375 3.375 0 0 0 2.456 2.456L21.75 6l-1.035.259a3.375 3.375 0 0 0-2.456 2.456ZM16.894 20.567 16.5 21.75l-.394-1.183a2.25 2.25 0 0 0-1.423-1.423L13.5 18.75l1.183-.394a2.25 2.25 0 0 0 1.423-1.423l.394-1.183.394 1.183a2.25 2.25 0 0 0 1.423 1.423l1.183.394-1.183.394a2.25 2.25 0 0 0-1.423 1.423Z" stroke="#ffffff" stroke-width="1.3" stroke-linecap="round" stroke-linejoin="round"/></svg>
<div style="position:absolute;left:3373.20px;top:864.29px;font-family:'Liberation Sans', sans-serif;font-size:26px;line-height:26px;font-weight:400;color:#ffffff;white-space:pre;-webkit-text-stroke:1.09px #ffffff;letter-spacing:0.000px;will-change:transform;letter-spacing:1px">AI</div>
<div style="position:absolute;left:1211.70px;top:931.68px;font-family:'Liberation Sans', sans-serif;font-size:24px;line-height:24px;font-weight:400;color:#475569;white-space:pre;letter-spacing:0.044px;will-change:transform;">This text appears after the subject line in most email clients</div>
<div style="position:absolute;left:1172.4px;top:1043.7px;width:2288.5px;height:1200px;background:#fcfcfd;border:2px solid #dde3ea;border-radius:16px;overflow:hidden"></div>
<div style="position:absolute;left:1174.4px;top:1045.7px;width:2284.5px;height:189px;background:#f5f7fa;border-radius:14px 14px 0 0"></div>
<div style="position:absolute;left:1174.4px;top:1141.7px;width:2284.5px;height:2px;background:#dde3ea"></div>
<div style="position:absolute;left:1212.80px;top:1079.09px;font-family:'Liberation Sans', sans-serif;font-size:28px;line-height:28px;font-weight:400;color:#1e293b;white-space:pre;-webkit-text-stroke:1.18px #1e293b;letter-spacing:0.464px;will-change:transform;">Newsletter Content</div>
<div style="position:absolute;left:3020.6px;top:1068px;width:234.4px;height:50.4px;background:#ffffff;border:2px solid #cbd5e1;border-radius:12px"></div>
<div style="position:absolute;left:3038.7px;top:1085.2px;width:16px;height:16px;background:#2453e6;border-radius:50%"></div>
<div style="position:absolute;left:3061.6px;top:1085.2px;width:16px;height:16px;background:#4b5b6d;border-radius:50%"></div>
<div style="position:absolute;left:3083.6px;top:1085.2px;width:16px;height:16px;background:#d5dde7;border-radius:50%"></div>
<div style="position:absolute;left:3115.40px;top:1081.48px;font-family:'Liberation Sans', sans-serif;font-size:24px;line-height:24px;font-weight:400;color:#1e293b;white-space:pre;-webkit-text-stroke:0.43px #1e293b;letter-spacing:-0.074px;will-change:transform;">Classic</div>
<svg style="position:absolute;left:3205px;top:1076.5px;" width="36" height="36" viewBox="0 0 24 24" fill="none"><path d="M8.25 15 12 18.75 15.75 15m-7.5-6L12 5.25 15.75 9" stroke="#64748b" stroke-width="1.3" stroke-linecap="round" stroke-linejoin="round"/></svg>
<div style="position:absolute;left:3279.40px;top:1081.48px;font-family:'Liberation Sans', sans-serif;font-size:24px;line-height:24px;font-weight:400;color:#c8680c;white-space:pre;-webkit-text-stroke:1.01px #c8680c;letter-spacing:-0.072px;will-change:transform;">Hide Preview</div>
<div style="position:absolute;left:1175px;top:1233.8px;width:1140px;height:2px;background:#dde3ea"></div>
<div style="position:absolute;left:2315px;top:1143.7px;width:2px;height:1100px;background:#dde3ea"></div>
<svg style="position:absolute;left:1206.6px;top:1174.1px;" width="30.7" height="30.7" viewBox="0 0 24 24" fill="none"><path d="M6 12h9a4 4 0 0 1 0 8H7a1 1 0 0 1-1-1V5a1 1 0 0 1 1-1h7a4 4 0 0 1 0 8" stroke="#475569" stroke-width="2.5" stroke-linecap="round" stroke-linejoin="round" fill="none"/></svg>
<svg style="position:absolute;left:1268.9px;top:1174.2px;" width="30.2" height="30.2" viewBox="0 0 24 24" fill="none"><path d="M19 4h-9M14 20H5M15 4 9 20" stroke="#475569" stroke-width="2" stroke-linecap="round" stroke-linejoin="round" fill="none"/></svg>
<div style="position:absolute;left:1324px;top:1172px;width:2px;height:35px;background:#cbd5e1"></div>
<div style="position:absolute;left:1468.7px;top:1172px;width:2px;height:35px;background:#cbd5e1"></div>
<div style="position:absolute;left:1614px;top:1172px;width:2px;height:35px;background:#cbd5e1"></div>
<div style="position:absolute;left:1940px;top:1172px;width:2px;height:35px;background:#cbd5e1"></div>
<div style="position:absolute;left:1354.80px;top:1178.68px;font-family:'Liberation Sans', sans-serif;font-size:24px;line-height:24px;font-weight:400;color:#475569;white-space:pre;-webkit-text-stroke:1.01px #475569;letter-spacing:0.000px;will-change:transform;">H</div>
<div style="position:absolute;left:1373.50px;top:1187.15px;font-family:'Liberation Sans', sans-serif;font-size:14px;line-height:14px;font-weight:400;color:#475569;white-space:pre;letter-spacing:0.000px;will-change:transform;">1</div>
<div style="position:absolute;left:1415.70px;top:1178.68px;font-family:'Liberation Sans', sans-serif;font-size:24px;line-height:24px;font-weight:400;color:#475569;white-space:pre;-webkit-text-stroke:1.01px #475569;letter-spacing:0.000px;will-change:transform;">H</div>
<div style="position:absolute;left:1434.00px;top:1178.15px;font-family:'Liberation Sans', sans-serif;font-size:14px;line-height:14px;font-weight:700;color:#475569;white-space:pre;letter-spacing:0.000px;will-change:transform;">2</div>
<svg style="position:absolute;left:1499px;top:1176px;" width="26" height="26" viewBox="0 0 26 26" fill="none"><circle cx="3" cy="4" r="2.2" fill="#475569"/><circle cx="3" cy="13" r="2.2" fill="#475569"/><circle cx="3" cy="22" r="2.2" fill="#475569"/><path d="M9 4h15M9 13h15M9 22h15" stroke="#475569" stroke-width="2.4" stroke-linecap="round"/></svg>
<svg style="position:absolute;left:1560px;top:1176px;" width="26" height="26" viewBox="0 0 26 26" fill="none"><path d="M10 4h14M10 13h14M10 22h14" stroke="#475569" stroke-width="2.4" stroke-linecap="round"/><text x="0" y="8" font-size="8" fill="#475569" font-family="Liberation Sans">1</text><text x="0" y="16" font-size="8" fill="#475569" font-family="Liberation Sans">2</text><text x="0" y="25" font-size="8" fill="#475569" font-family="Liberation Sans">3</text></svg>
<svg style="position:absolute;left:1642px;top:1174px;" width="32" height="32" viewBox="0 0 32 32" fill="none"><path d="M13.5 18.5a5.5 5.5 0 0 0 7.8 0l4.6-4.6a5.5 5.5 0 0 0-7.8-7.8l-1.8 1.8M18.5 13.5a5.5 5.5 0 0 0-7.8 0l-4.6 4.6a5.5 5.5 0 0 0 7.8 7.8l1.8-1.8" stroke="#475569" stroke-width="2.4" stroke-linecap="round" fill="none"/></svg>
<svg style="position:absolute;left:1702px;top:1174px;" width="32" height="32" viewBox="0 0 32 32" fill="none"><rect x="2.5" y="5" width="27" height="22" rx="2.5" stroke="#475569" stroke-width="2.2" fill="none"/><path d="M3 24l8-8 6 6 4-4 8 7" stroke="#475569" stroke-width="2.2" stroke-linejoin="round" fill="none"/><circle cx="22" cy="11" r="1.6" fill="#475569"/></svg>
<svg style="position:absolute;left:1762px;top:1174px;" width="32" height="32" viewBox="0 0 32 32" fill="none"><path d="M5 4h22a2.5 2.5 0 0 1 2.5 2.5v13a2.5 2.5 0 0 1-2.5 2.5H18l-3 4-3-4H5a2.5 2.5 0 0 1-2.5-2.5v-13A2.5 2.5 0 0 1 5 4Z" stroke="#475569" stroke-width="2.2" stroke-linejoin="round" fill="none"/><path d="M9 10h14M9 15h9" stroke="#475569" stroke-width="2.2" stroke-linecap="round"/></svg>
<div style="position:absolute;left:1828px;top:1188px;width:20px;height:2.4px;background:#475569"></div>
<svg style="position:absolute;left:1883px;top:1175px;" width="30" height="30" viewBox="0 0 30 30" fill="none"><circle cx="15" cy="15" r="12" stroke="#475569" stroke-width="2.2" fill="none"/><circle cx="11" cy="12" r="1.6" fill="#475569"/><circle cx="19" cy="12" r="1.6" fill="#475569"/><path d="M9.5 17.5c2.8 3.5 8.2 3.5 11 0" stroke="#475569" stroke-width="2.2" stroke-linecap="round" fill="none"/></svg>
<div style="position:absolute;left:1957.6px;top:1160px;width:198px;height:58.3px;background:#ffffff;border:2px solid #cbd5e1;border-radius:12px"></div>
<svg style="position:absolute;left:1980px;top:1176px;" width="28" height="26" viewBox="0 0 28 26" fill="none"><rect x="0" y="2" width="28" height="22" rx="3" fill="#475569"/><circle cx="8.5" cy="10" r="3" fill="#fff"/><path d="M3.5 19.5c.8-3 2.5-4.5 5-4.5s4.2 1.5 5 4.5Z" fill="#fff"/><path d="M16 9h8M16 14h8M16 19h6" stroke="#fff" stroke-width="2.2"/></svg>
<div style="position:absolute;left:2018.00px;top:1175.79px;font-family:'Liberation Sans', sans-serif;font-size:28px;line-height:28px;font-weight:400;color:#1e293b;white-space:pre;-webkit-text-stroke:0.50px #1e293b;letter-spacing:-0.594px;will-change:transform;">Merge</div>
<svg style="position:absolute;left:2106px;top:1177px;" width="24" height="24" viewBox="0 0 24 24" fill="none"><path d="m19.5 8.25-7.5 7.5-7.5-7.5" stroke="#64748b" stroke-width="1.8" stroke-linecap="round" stroke-linejoin="round"/></svg>
<div style="position:absolute;left:2208.00px;top:1178.68px;font-family:'Liberation Sans', sans-serif;font-size:24px;line-height:24px;font-weight:400;color:#8c9bb0;white-space:pre;letter-spacing:-0.174px;will-change:transform;">7 words</div>
<div style="position:absolute;left:1204.40px;top:1281.91px;font-family:'Liberation Sans', sans-serif;font-size:32px;line-height:32px;font-weight:400;color:#111111;white-space:pre;letter-spacing:-0.364px;will-change:transform;">Hi {{firstname}}</div>
<div style="position:absolute;left:1204.40px;top:1398.91px;font-family:'Liberation Sans', sans-serif;font-size:32px;line-height:32px;font-weight:400;color:#111111;white-space:pre;letter-spacing:-0.492px;will-change:transform;">This is my first newsletter.</div>
<div style="position:absolute;left:2317px;top:1227px;width:1141.9px;height:2px;background:#dde3ea"></div>
<div style="position:absolute;left:2347.00px;top:1172.99px;font-family:'Liberation Sans', sans-serif;font-size:26px;line-height:26px;font-weight:400;color:#475569;white-space:pre;-webkit-text-stroke:1.09px #475569;letter-spacing:-1.247px;will-change:transform;">Preview</div>
<svg style="position:absolute;left:3266.7px;top:1171px;" width="29" height="29" viewBox="0 0 24 24" fill="none"><path d="M10.5 1.5H8.25A2.25 2.25 0 0 0 6 3.75v16.5a2.25 2.25 0 0 0 2.25 2.25h7.5A2.25 2.25 0 0 0 18 20.25V3.75a2.25 2.25 0 0 0-2.25-2.25H13.5m-3 0V3h3V1.5m-3 0h3m-3 18.75h3" stroke="#64748b" stroke-width="1.5" stroke-linecap="round" stroke-linejoin="round"/></svg>
<svg style="position:absolute;left:3327.4px;top:1170.9px;" width="29.3" height="29.3" viewBox="0 0 24 24" fill="none"><path d="M10.5 19.5h3m-6.75 2.25h10.5a2.25 2.25 0 0 0 2.25-2.25v-15a2.25 2.25 0 0 0-2.25-2.25H6.75A2.25 2.25 0 0 0 4.5 4.5v15a2.25 2.25 0 0 0 2.25 2.25Z" stroke="#64748b" stroke-width="1.5" stroke-linecap="round" stroke-linejoin="round"/></svg>
<div style="position:absolute;left:3375.6px;top:1159.6px;width:53.4px;height:51.4px;background:#fdeec0;border-radius:10px"></div>
<svg style="position:absolute;left:3387.2px;top:1170.8px;" width="29.5" height="29.5" viewBox="0 0 24 24" fill="none"><path d="M9 17.25v1.007a3 3 0 0 1-.879 2.122L7.5 21h9l-.621-.621A3 3 0 0 1 15 18.257V17.25m6-12V15a2.25 2.25 0 0 1-2.25 2.25H5.25A2.25 2.25 0 0 1 3 15V5.25m18 0A2.25 2.25 0 0 0 18.75 3H5.25A2.25 2.25 0 0 0 3 5.25m18 0V12a2.25 2.25 0 0 1-2.25 2.25H5.25A2.25 2.25 0 0 1 3 12V5.25" stroke="#d0700a" stroke-width="1.5" stroke-linecap="round" stroke-linejoin="round"/></svg>
<div style="position:absolute;left:2317px;top:1229px;width:1141.9px;height:1000px;background:#eef2f6"></div>
<div style="position:absolute;left:2348px;top:1260px;width:1080.5px;height:1000px;background:#f5f7fa;border:2px solid #dde3ea;border-radius:16px;box-shadow:0 1px 3px rgba(15,23,42,0.05)"></div>
<div style="position:absolute;left:2386px;top:1336.6px;width:1003px;height:531px;background:#fdfdfd;border-radius:16px;box-shadow:0 3px 7px rgba(15,23,42,0.09), 0 1px 2px rgba(15,23,42,0.05)"></div>
<div style="position:absolute;left:2768.00px;top:1426.53px;font-family:'Liberation Serif', serif;font-size:34px;line-height:34px;font-weight:400;color:#0b0f19;white-space:pre;-webkit-text-stroke:0.61px #0b0f19;letter-spacing:-0.670px;will-change:transform;">This is my subject</div>
<div style="position:absolute;left:2764.00px;top:1464.55px;font-family:'Liberation Serif', serif;font-size:28px;line-height:28px;font-weight:400;color:#1f2937;white-space:pre;letter-spacing:-0.642px;will-change:transform;">Rob Martin Groupmail</div>
<div style="position:absolute;left:2719.80px;top:1501.05px;font-family:'Liberation Serif', serif;font-size:28px;line-height:28px;font-weight:400;color:#74849a;white-space:pre;letter-spacing:-0.431px;will-change:transform;">Wednesday, February 18, 2026</div>
<div style="position:absolute;left:2461.7px;top:1552.2px;width:852px;height:2px;background:#d9e0e8"></div>
<div style="position:absolute;left:2461.70px;top:1610.98px;font-family:'Liberation Serif', serif;font-size:38px;line-height:38px;font-weight:400;color:#111827;white-space:pre;letter-spacing:0.117px;will-change:transform;">Hi John</div>
<div style="position:absolute;left:2461.70px;top:1698.18px;font-family:'Liberation Serif', serif;font-size:38px;line-height:38px;font-weight:400;color:#111827;white-space:pre;letter-spacing:-0.416px;will-change:transform;">This is my first newsletter.</div>
<div style="position:absolute;left:2728.05px;top:1916.68px;font-family:'Liberation Sans', sans-serif;font-size:24px;line-height:24px;font-weight:400;color:#7a8aa0;white-space:pre;letter-spacing:-0.026px;will-change:transform;">© 2026 Rob Martin Groupmail</div>
<div style="position:absolute;left:2642.55px;top:1951.38px;font-family:'Liberation Sans', sans-serif;font-size:24px;line-height:24px;font-weight:400;color:#7a8aa0;white-space:pre;letter-spacing:-0.140px;will-change:transform;">Groupmail, Strandhill, Co. Sligo 94102, Ireland</div>
<div style="position:absolute;left:2522.00px;top:2004.38px;font-family:'Liberation Sans', sans-serif;font-size:24px;line-height:24px;font-weight:400;color:#7a8aa0;white-space:pre;letter-spacing:0.042px;will-change:transform;">You received this email because you&#x27;re subscribed to our newsletter.</div>
<div style="position:absolute;left:2820.80px;top:2045.68px;font-family:'Liberation Sans', sans-serif;font-size:24px;line-height:24px;font-weight:400;color:#4b5b6f;white-space:pre;letter-spacing:-0.061px;will-change:transform;text-decoration:underline;text-underline-offset:3px">Unsubscribe</div>
<div style="position:absolute;left:640px;top:2070px;width:2820px;height:94px;background:linear-gradient(to bottom, rgba(0,0,0,0) 0%, rgba(0,0,0,0.03) 45%, rgba(0,0,0,0.16) 100%);-webkit-mask-image:linear-gradient(to right, transparent 0, black 380px, black 2450px, transparent 2820px)"></div>
</div>
<div style="position:absolute;left:0;top:2px;width:4093px;height:2162px;border-radius:14px 16px 20px 20px;box-shadow:inset 0 0 0 1px rgba(0,0,0,0.6);pointer-events:none"></div>
</body></html>
